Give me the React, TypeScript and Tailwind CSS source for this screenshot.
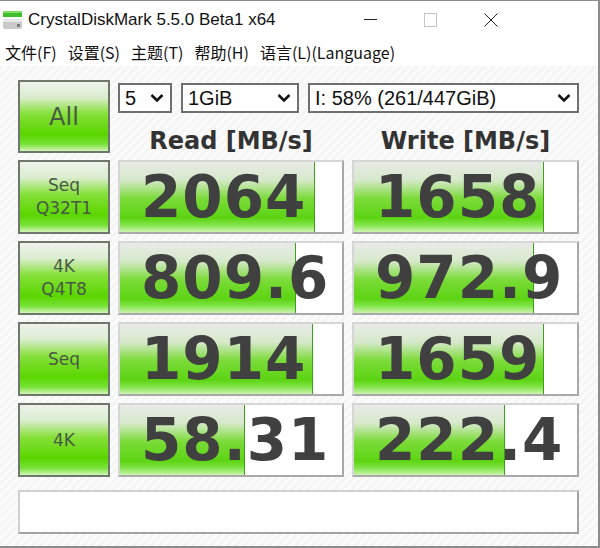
import React from "react";

const rows = [
  { label: ["Seq", "Q32T1"], read: "2064", readFill: 195, write: "1658", writeFill: 190 },
  { label: ["4K", "Q4T8"], read: "809.6", readFill: 176, write: "972.9", writeFill: 180 },
  { label: ["Seq"], read: "1914", readFill: 193, write: "1659", writeFill: 190 },
  { label: ["4K"], read: "58.31", readFill: 125, write: "222.4", writeFill: 151 },
];

const menus = ["文件(F)", "设置(S)", "主题(T)", "帮助(H)", "语言(L)(Language)"];

const Chevron = () => (
  <svg width="14" height="10" viewBox="0 0 14 10" className="shrink-0">
    <polyline points="1.5,2 7,7.5 12.5,2" fill="none" stroke="#111" strokeWidth="2.6" />
  </svg>
);

const Select = ({ value, w }: { value: string; w: string }) => (
  <div
    className={`${w} h-[30px] flex items-center justify-between border-2 border-[#6f6f6f] bg-white pl-[5px] pr-[6px] text-[20px] text-[#111] font-['Liberation_Sans',sans-serif]`}
  >
    <span className="leading-none">{value}</span>
    <Chevron />
  </div>
);

const LabelButton = ({ lines, big }: { lines: string[]; big?: boolean }) => (
  <div className="h-full flex flex-col items-center justify-center border-2 border-[#6e776c] bg-[linear-gradient(to_bottom,#eef2ec_0%,#dbedcf_22%,#86e03a_46%,#5ad600_76%,#78e238_90%,#d4f6b8_100%)] text-[#475843] font-['DejaVu_Sans',sans-serif]">
    {lines.map((l) => (
      <span key={l} className={big ? "text-[24px] leading-[28px]" : "text-[17px] leading-[23px]"}>
        {l}
      </span>
    ))}
  </div>
);

const Meter = ({ value, fill }: { value: string; fill: number }) => (
  <div className="relative h-full overflow-hidden border-2 border-t-[#d6d6d6] border-l-[#d6d6d6] border-r-[#a9a9a9] border-b-[#a9a9a9] bg-white">
    <div
      className="absolute left-0 top-0 bottom-0 border-r border-[#3f9f1a] bg-[linear-gradient(to_bottom,#e8eae7_0%,#d6e9ca_26%,#7cdb3a_52%,#5cd412_80%,#82e44a_90%,#ccf4b0_100%)]"
      style={{ width: fill }}
    />
    <div className="relative flex h-full items-center pl-[21px] text-[58px] font-bold leading-none tracking-[1px] text-[#404040] font-['DejaVu_Sans',sans-serif]">
      {value}
    </div>
  </div>
);

export default function App() {
  return (
    <div className="w-[600px] h-[548px] flex flex-col border-t border-r-2 border-b-2 border-[#8c8c8c] bg-white overflow-hidden">
      {/* Title bar */}
      <div className="h-[37px] flex items-center shrink-0">
        <svg width="22" height="22" viewBox="0 0 22 22" className="ml-[2px]">
          <rect x="1" y="2" width="19" height="6" fill="#3fbf2a" />
          <rect x="1" y="2" width="19" height="2" fill="#7be064" />
          <rect x="1" y="10" width="19" height="10" rx="2" fill="#c9cbc9" />
          <rect x="1" y="10" width="19" height="3" rx="1" fill="#e6e7e6" />
          <rect x="15" y="15" width="3" height="3" fill="#7a7d7a" />
        </svg>
        <span className="ml-[4px] text-[17px] text-[#111] font-['Liberation_Sans',sans-serif]">
          CrystalDiskMark 5.5.0 Beta1 x64
        </span>
        <div className="ml-auto flex items-center mr-[100px] gap-[47px]">
          <div className="w-[13px] h-px bg-[#222]" />
          <div className="w-[13px] h-[14px] border border-[#c4c4c4]" />
          <svg width="14" height="14" viewBox="0 0 14 14">
            <path d="M0.5 0.5 L13.5 13.5 M13.5 0.5 L0.5 13.5" stroke="#222" strokeWidth="1" />
          </svg>
        </div>
      </div>

      {/* Menu bar */}
      <div className="h-[28px] flex items-center gap-[11px] pl-[5px] shrink-0 text-[16px] text-[#111] font-['Noto_Sans_CJK_SC',sans-serif]">
        {menus.map((m) => (
          <span key={m} className="leading-none">{m}</span>
        ))}
      </div>

      {/* Content */}
      <div className="flex-1 flex flex-col pl-[18px] pt-[14px] bg-[repeating-linear-gradient(135deg,#f5f5f5_0px,#f5f5f5_3px,#fbfbfb_3px,#fbfbfb_6px)]">
        <div className="grid grid-cols-[92px_226px_227px] grid-rows-[73px_74px_74px_74px_74px] gap-x-[8px] gap-y-[7px]">
          <LabelButton lines={["All"]} big />
          <div className="col-span-2 flex flex-col">
            <div className="flex gap-[9px] mt-[3px]">
              <Select value="5" w="w-[54px]" />
              <Select value="1GiB" w="w-[118px]" />
              <Select value="I: 58% (261/447GiB)" w="w-[271px]" />
            </div>
            <div className="grid grid-cols-[226px_227px] gap-x-[8px] mt-[13px] text-[24px] font-bold text-[#333] font-['DejaVu_Sans',sans-serif] leading-[30px]">
              <span className="text-center">Read [MB/s]</span>
              <span className="text-center">Write [MB/s]</span>
            </div>
          </div>
          {rows.map((r) => (
            <React.Fragment key={r.read}>
              <LabelButton lines={r.label} />
              <Meter value={r.read} fill={r.readFill} />
              <Meter value={r.write} fill={r.writeFill} />
            </React.Fragment>
          ))}
        </div>
        <div className="mt-[13px] w-[561px] h-[44px] border-2 border-t-[#d0d0d0] border-l-[#d0d0d0] border-r-[#a4a4a4] border-b-[#a4a4a4] bg-white" />
      </div>
    </div>
  );
}
